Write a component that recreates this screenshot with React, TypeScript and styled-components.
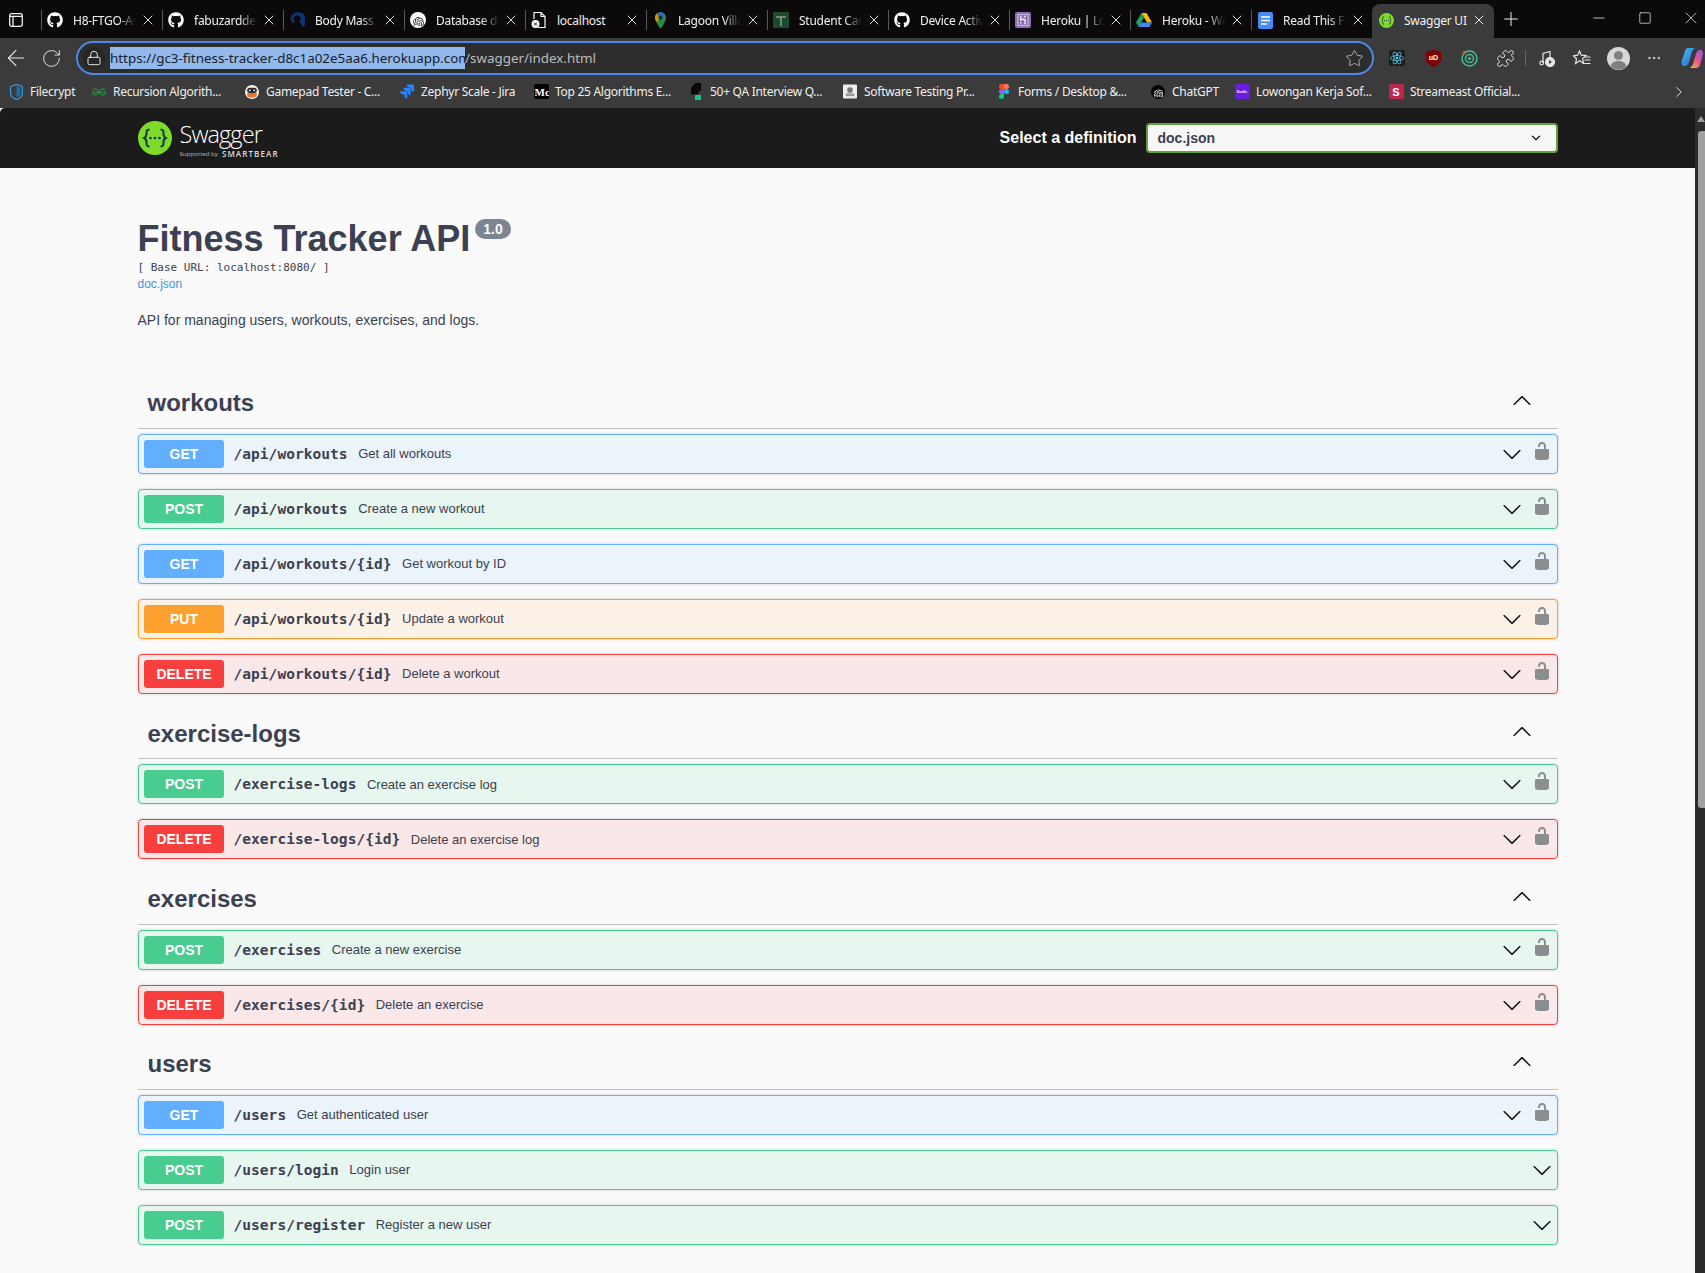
import React from "react";
import styled, { createGlobalStyle } from "styled-components";
import { ArrowLeft, RotateCw, Lock, Star, Puzzle, MoreHorizontal, ChevronRight, ChevronDown, Plus, X, Minus, Square } from "lucide-react";
import { FaGithub } from "react-icons/fa";
import { SiOpenai, SiHeroku, SiReact, SiGeeksforgeeks, SiJira } from "react-icons/si";

const GlobalStyle = createGlobalStyle`
  html, body { margin: 0; padding: 0; height: 100%; overflow: hidden; background: #fafafa; }
  * { box-sizing: border-box; }
`;

const uiFont = `"Noto Sans", "Open Sans", sans-serif`;
const docFont = `"Liberation Sans", Arial, sans-serif`;
const monoFont = `"DejaVu Sans Mono", "Liberation Mono", monospace`;

const Screen = styled.div`
  width: 1705px;
  height: 1273px;
  display: flex;
  flex-direction: column;
  overflow: hidden;
`;

/* browser chrome */
const TabStrip = styled.div`
  height: 38px;
  flex: none;
  display: flex;
  background: #0c090a;
  color: #f2f2f2;
  font: 12px ${uiFont};
  letter-spacing: -0.25px;
`;
const WindowMenu = styled.div`
  width: 41px;
  flex: none;
  display: flex;
  align-items: center;
  padding-left: 9px;
  padding-top: 2px;
`;
const Tab = styled.div<{ $active?: boolean }>`
  position: relative;
  width: ${(p) => (p.$active ? "122px" : "121px")};
  margin-top: 4px;
  flex: none;
  display: flex;
  align-items: center;
  padding: 0 0 2px 6px;
  border-radius: 8px 8px 0 0;
  background: ${(p) => (p.$active ? "#3b3b3b" : "transparent")};
  &::before {
    content: "";
    display: ${(p) => (p.$active ? "none" : "block")};
    position: absolute;
    left: 0;
    top: 6px;
    height: 20px;
    width: 1px;
    background: #5a5a5a;
  }
`;
const TabIcon = styled.span`
  width: 16px;
  height: 16px;
  flex: none;
  display: flex;
  align-items: center;
  justify-content: center;
`;
const TabTitle = styled.span<{ $fade?: boolean }>`
  margin-left: 10px;
  width: 63px;
  flex: none;
  white-space: nowrap;
  overflow: hidden;
  ${(p) => (p.$fade ? "mask-image: linear-gradient(90deg, #000 72%, transparent 100%);" : "")}
`;
const TabClose = styled.span`
  margin-left: 4px;
  display: flex;
  color: #ededed;
`;
const NewTab = styled.div`
  margin-left: 6px;
  display: flex;
  align-items: center;
  color: #eee;
`;
const WindowButtons = styled.div`
  margin-left: auto;
  display: flex;
  align-items: center;
  gap: 18px;
  padding-bottom: 2px;
  color: #eee;
`;
const IconSlot = styled.span<{ $w: number }>`
  width: ${(p) => p.$w}px;
  flex: none;
  display: flex;
  align-items: center;
  justify-content: center;
`;
const Toolbar = styled.div`
  height: 37px;
  flex: none;
  display: flex;
  align-items: center;
  padding-top: 3px;
  background: #3b3b3b;
  color: #e6e6e6;
`;
const NavButtons = styled.div`
  width: 76px;
  flex: none;
  display: flex;
  align-items: center;
  gap: 12px;
  padding-left: 3px;
`;
const AddressBar = styled.div`
  width: 1298px;
  height: 34px;
  flex: none;
  display: flex;
  align-items: center;
  border: 2px solid #4d87e6;
  border-radius: 17px;
  background: #2d2d2d;
  padding: 0 8px 0 5px;
  font: 13.4px ${uiFont};
`;
const LockBadge = styled.span`
  width: 22px;
  height: 22px;
  border-radius: 50%;
  background: #262626;
  display: flex;
  align-items: center;
  justify-content: center;
  flex: none;
`;
const SelectedUrl = styled.span`
  margin-left: 5px;
  height: 22px;
  line-height: 22px;
  width: 355px;
  flex: none;
  white-space: nowrap;
  background: #93b9ec;
  color: #16202c;
`;
const RestUrl = styled.span`
  color: #bcbcbc;
`;
const StarSlot = styled.span`
  margin-left: auto;
  display: flex;
  color: #bdbdbd;
`;
const ExtensionRow = styled.div`
  display: flex;
  align-items: center;
  flex: none;
  width: 331px;
  padding-left: 5px;
`;
const ExtDivider = styled.span`
  width: 1px;
  height: 16px;
  margin: 0 0 0 2px;
  background: #666;
  flex: none;
`;
const Bookmarks = styled.div`
  height: 33px;
  flex: none;
  display: flex;
  align-items: center;
  padding-left: 9px;
  background: #3b3b3b;
  color: #f0f0f0;
  font: 12px ${uiFont};
  letter-spacing: -0.28px;
`;
const Bookmark = styled.div<{ $w: number }>`
  width: ${(p) => p.$w}px;
  display: flex;
  align-items: center;
  flex: none;
  white-space: nowrap;
`;
const BookmarkIcon = styled.span`
  width: 14px;
  height: 16px;
  margin-right: 7px;
  flex: none;
  display: flex;
  align-items: center;
  justify-content: center;
`;
const MoreBookmarks = styled.span`
  margin-left: auto;
  margin-right: 17px;
  display: flex;
`;
const TinyTile = styled.span<{ $bg: string; $size?: number }>`
  width: ${(p) => p.$size ?? 15}px;
  height: ${(p) => p.$size ?? 15}px;
  flex: none;
  border-radius: 2px;
  background: ${(p) => p.$bg};
  color: #fff;
  display: flex;
  align-items: center;
  justify-content: center;
  overflow: hidden;
  letter-spacing: 0;
  font: bold 11px ${docFont};
`;
const MediumTile = styled(TinyTile)`
  font: bold 11px "Liberation Serif", serif;
  justify-content: flex-start;
  padding-left: 1px;
`;
const DeallsTile = styled(TinyTile)`
  font-size: 3.5px;
`;

/* swagger page */
const Viewport = styled.div`
  flex: 1;
  min-height: 0;
  display: flex;
`;
const PageColumn = styled.div`
  flex: 1;
  min-width: 0;
  background: #fafafa;
  font-family: ${docFont};
  color: #3b4151;
`;
const Scrollbar = styled.div`
  width: 10px;
  flex: none;
  background: #2c2c2c;
  display: flex;
  flex-direction: column;
  align-items: flex-end;
  padding-top: 8px;
`;
const ScrollArrow = styled.span`
  width: 0;
  height: 0;
  border-left: 4px solid transparent;
  border-right: 4px solid transparent;
  border-bottom: 6px solid #9c9c9c;
`;
const ScrollThumb = styled.span`
  width: 7px;
  height: 677px;
  margin-top: 9px;
  background: #a0a0a0;
  border-radius: 3px 0 0 3px;
`;
const Topbar = styled.header`
  height: 60px;
  background: #1b1b1b;
  border-radius: 5px 0 0 0;
`;
const Wrapper = styled.div`
  max-width: 1460px;
  margin: 0 auto;
  padding: 0 20px;
`;
const TopbarInner = styled(Wrapper)`
  height: 100%;
  display: flex;
  align-items: center;
`;
const Brand = styled.div`
  display: flex;
  align-items: center;
  gap: 8px;
`;
const BrandText = styled.div`
  display: flex;
  flex-direction: column;
  color: #fff;
  margin-top: 2px;
`;
const BrandName = styled.span`
  font: 300 23.5px/26px "Open Sans", sans-serif;
  letter-spacing: -0.9px;
`;
const BrandSub = styled.span`
  margin-top: 2px;
  font: 6.1px/9px "Open Sans", sans-serif;
  color: #bbb;
  display: flex;
  align-items: center;
  gap: 4px;
  b {
    font: 600 8px/9px "Open Sans", sans-serif;
    letter-spacing: 1.1px;
    color: #ddd;
  }
`;
const DefinitionForm = styled.div`
  margin-left: auto;
  display: flex;
  align-items: center;
  gap: 9px;
`;
const DefinitionLabel = styled.span`
  color: #fff;
  font: bold 16px ${docFont};
`;
const DefinitionSelect = styled.div`
  width: 412px;
  height: 30px;
  display: flex;
  align-items: center;
  justify-content: space-between;
  padding: 0 13px 0 10px;
  border: 2px solid #62a03f;
  border-radius: 4px;
  background: #f7f7f7;
  color: #3b4151;
  font: bold 14px ${docFont};
`;
const Info = styled.div`
  padding-top: 50px;
  margin-bottom: 48.67px;
`;
const TitleRow = styled.div`
  display: flex;
  align-items: flex-start;
  gap: 5px;
`;
const Title = styled.h2`
  margin: 0;
  font: bold 36px/42px ${docFont};
`;
const Version = styled.span`
  margin-top: 1px;
  height: 20px;
  padding: 0 8px;
  border-radius: 10px;
  background: #7d8492;
  color: #fafafa;
  font: bold 14px/20px ${docFont};
`;
const BaseUrl = styled.div`
  font: 11px/16px ${monoFont};
`;
const SpecLink = styled.div`
  font: 12px/16px ${docFont};
  color: #4990e2;
`;
const Description = styled.p`
  margin: 18px 0 0;
  font: 14px/20px ${docFont};
`;
const TagHeading = styled.div`
  height: 50.33px;
  display: flex;
  align-items: center;
  justify-content: space-between;
  padding: 0 26px 0 10px;
  margin-bottom: 5px;
  border-bottom: 1px solid rgba(59, 65, 81, 0.3);
  font: bold 24px ${docFont};
  svg {
    margin-bottom: 4px;
  }
`;

type Method = "GET" | "POST" | "PUT" | "DELETE";
const methodColors: Record<Method, { main: string; tint: string }> = {
  GET: { main: "#61affe", tint: "#ebf3fb" },
  POST: { main: "#49cc90", tint: "#e8f6f0" },
  PUT: { main: "#fca130", tint: "#fbf1e6" },
  DELETE: { main: "#f93e3e", tint: "#fae7e7" },
};

const OpRow = styled.div<{ $method: Method }>`
  height: 40px;
  margin-bottom: 15px;
  display: flex;
  align-items: center;
  padding: 0 5px;
  border: 1px solid ${(p) => methodColors[p.$method].main};
  border-radius: 4px;
  background: ${(p) => methodColors[p.$method].tint};
  box-shadow: 0 0 3px rgba(0, 0, 0, 0.19);
`;
const MethodBadge = styled.span<{ $method: Method }>`
  width: 80px;
  height: 28px;
  flex: none;
  padding-left: 1px;
  border-radius: 3px;
  background: ${(p) => methodColors[p.$method].main};
  color: #fff;
  text-align: center;
  font: bold 14px/28px ${docFont};
`;
const OpPath = styled.span`
  margin-left: 10px;
  padding-right: 10.5px;
  font: bold 14.5px ${monoFont};
  letter-spacing: 0.05px;
`;
const OpSummary = styled.span`
  font: 13px/1 ${docFont};
`;
const OpControls = styled.div`
  margin-left: auto;
  display: flex;
  align-items: center;
  gap: 10px;
`;
const LockButton = styled.svg`
  margin-bottom: 6px;
  fill: #8b8e90;
`;

const Chevron = ({ up }: { up?: boolean }) => (
  <svg width="20" height="20" viewBox="0 0 20 20" fill="#111" style={up ? { transform: "rotate(180deg)" } : undefined}>
    <path d="M17.418 6.109c.272-.268.709-.268.979 0s.271.701 0 .969l-7.908 7.83c-.27.268-.707.268-.979 0l-7.908-7.83c-.27-.268-.27-.701 0-.969.271-.268.709-.268.979 0L10 13.25l7.418-7.141z" />
  </svg>
);

const OpenLock = () => (
  <LockButton width="20" height="20" viewBox="0 0 20 20">
    <path d="M15.8 8H14V5.6C14 2.703 12.665 1 10 1 7.334 1 6 2.703 6 5.6V6h2v-.801C8 3.754 8.797 3 10 3c1.203 0 2 .754 2 2.199V8H4c-.553 0-1 .646-1 1.199V17c0 .549.428 1.139.951 1.307l1.197.387C5.672 18.861 6.55 19 7.1 19h5.8c.549 0 1.428-.139 1.951-.307l1.196-.387c.524-.167.953-.757.953-1.306V9.199C17 8.646 16.352 8 15.8 8z" />
  </LockButton>
);

const SwaggerMark = ({ size }: { size: number }) => (
  <svg width={size} height={size} viewBox="0 0 34 34">
    <circle cx="17" cy="17" r="17" fill="#7edb2c" />
    <path d="M11.5 8.5c-3 0-3 1.6-3 4 0 2.5-.4 3.6-2.2 4.5 1.8.9 2.2 2 2.2 4.5 0 2.4 0 4 3 4M22.5 8.5c3 0 3 1.6 3 4 0 2.5.4 3.6 2.2 4.5-1.8.9-2.2 2-2.2 4.5 0 2.4 0 4-3 4" fill="none" stroke="#173647" strokeWidth="2" />
    <circle cx="12.5" cy="17" r="1.3" fill="#173647" />
    <circle cx="17" cy="17" r="1.3" fill="#173647" />
    <circle cx="21.5" cy="17" r="1.3" fill="#173647" />
  </svg>
);

const WindowMenuIcon = () => (
  <svg width="14" height="14" viewBox="0 0 14 14" fill="none" stroke="#eee" strokeWidth="1.3">
    <rect x="0.7" y="0.7" width="12.6" height="12.6" rx="2" />
    <path d="M0.7 3.4h12.6M4 3.4v9.9" />
  </svg>
);

const RingMark = () => (
  <svg width="16" height="18" viewBox="0 0 16 18" fill="none">
    <path d="M8 1.5a6.2 6.2 0 0 0-4 11l2-2a3.4 3.4 0 1 1 4.3 0L14 16a8 8 0 0 0-6-14.500z" fill="#0e3370" />
  </svg>
);
const OpenAiDisc = ({ bg, fg }: { bg: string; fg: string }) => (
  <svg width="16" height="16" viewBox="0 0 16 16">
    <circle cx="8" cy="8" r="8" fill={bg} />
    <foreignObject x="2.500" y="2.500" width="11" height="11">
      <SiOpenai size={11} color={fg} />
    </foreignObject>
  </svg>
);
const LocalFile = () => (
  <svg width="16" height="18" viewBox="0 0 16 18" fill="none" stroke="#fff" strokeWidth="1.200">
    <path d="M3 8V1.500h7l4 4v11H7" />
    <path d="M10 1.500v4h4" />
    <circle cx="4.500" cy="13" r="4" fill="#fff" stroke="none" />
    <path d="M3 11.500l3 3M6 11.500l-3 3" stroke="#222" strokeWidth="1" />
  </svg>
);
const MapPin = () => (
  <svg width="13" height="17" viewBox="0 0 14 18">
    <path d="M7 0a6 6 0 0 0-6 6c0 4 6 12 6 12s6-8 6-12a6 6 0 0 0-6-6z" fill="#2b8a47" />
    <path d="M1 6a6 6 0 0 1 2-4.500l4 4.500-4 5C2 9.500 1 7.500 1 6z" fill="#c9970a" />
    <path d="M3 1.500A6 6 0 0 1 12 3L7 6z" fill="#2f66c4" />
    <circle cx="7" cy="6" r="2.200" fill="#0f2f6a" />
  </svg>
);
const SheetTile = () => (
  <svg width="16" height="16" viewBox="0 0 16 16">
    <rect width="16" height="16" rx="1" fill="#1c4a2e" />
    <path d="M3 5h10M8 5v9" stroke="#8d9c8f" strokeWidth="1.6" />
  </svg>
);
const HerokuTile = () => (
  <TinyTile $bg="#8b6fb5" $size={16}>
    <SiHeroku size={12} color="#fff" />
  </TinyTile>
);
const DriveMark = () => (
  <svg width="16" height="14" viewBox="0 0 16 14">
    <polygon points="5.500,0 10.500,0 16,9.500 11,9.500" fill="#fbbc04" />
    <polygon points="5.500,0 8,4.500 2.700,14 0,9.500" fill="#1fa463" />
    <polygon points="5,9.500 16,9.500 13.400,14 2.700,14" fill="#4285f4" />
  </svg>
);
const DocsMark = () => (
  <svg width="15" height="17" viewBox="0 0 15 17">
    <rect width="15" height="17" rx="2" fill="#4a8af4" />
    <path d="M3 5h9M3 8.500h9M3 12h6" stroke="#fff" strokeWidth="1.600" />
  </svg>
);
const ShieldMark = () => (
  <svg width="13" height="16" viewBox="0 0 13 16">
    <path d="M6.500.5 12.500 2.500v6c0 3.500-3 6-6 7-3-1-6-3.500-6-7v-6z" fill="none" stroke="#3e9bdc" strokeWidth="1.200" />
    <path d="M6.500 2.500 10.500 3.800v4.700c0 2.300-2 3.900-4 4.800z" fill="#1f6fb0" />
  </svg>
);
const GamepadFace = () => (
  <svg width="16" height="16" viewBox="0 0 16 16">
    <circle cx="8" cy="8" r="8" fill="#f4f0ea" />
    <rect x="2.500" y="3" width="11" height="6" rx="3" fill="#2a2a2a" />
    <path d="M2.500 9h11v2c0 2-3 3.500-5.500 3.500S2.500 13 2.500 11z" fill="#e8742c" />
    <circle cx="5.500" cy="6" r="1" fill="#fff" />
    <circle cx="10.500" cy="6" r="1" fill="#fff" />
  </svg>
);
const QaMark = () => (
  <svg width="14" height="17" viewBox="0 0 14 17">
    <polygon points="6,0 12,0 12,7 8,11.500 2,11.500 2,5" fill="#0a0a0a" />
    <rect x="6" y="12" width="6" height="5" fill="#1cc48d" />
  </svg>
);
const BookEmblem = () => (
  <svg width="15" height="15" viewBox="0 0 15 15">
    <rect width="15" height="15" rx="1" fill="#ededed" />
    <circle cx="7.500" cy="6" r="3" fill="#777" />
    <rect x="3" y="9.500" width="9" height="3" fill="#999" />
  </svg>
);
const FigmaMark = () => (
  <svg width="10" height="15" viewBox="0 0 10 15">
    <path d="M0 2.500A2.500 2.500 0 0 1 2.500 0H5v5H2.500A2.500 2.500 0 0 1 0 2.500z" fill="#f24e1e" />
    <path d="M5 0h2.500a2.500 2.500 0 0 1 0 5H5z" fill="#ff7262" />
    <path d="M0 7.500A2.500 2.500 0 0 1 2.500 5H5v5H2.500A2.500 2.500 0 0 1 0 7.500z" fill="#a259ff" />
    <circle cx="7.500" cy="7.500" r="2.500" fill="#1abcfe" />
    <path d="M0 12.500A2.500 2.500 0 0 1 2.500 10H5v2.500a2.500 2.500 0 0 1-5 0z" fill="#0acf83" />
  </svg>
);
const UblockShield = () => (
  <svg width="15" height="17" viewBox="0 0 15 17">
    <path d="M7.500 0 15 2v7c0 4-4 6.500-7.500 8C4 15.500 0 13 0 9V2z" fill="#800000" />
    <text x="7.500" y="10" textAnchor="middle" fontSize="7" fontWeight="700" fill="#fff" fontFamily="Liberation Sans">uD</text>
  </svg>
);
const TargetRing = () => (
  <svg width="17" height="17" viewBox="0 0 17 17" fill="none">
    <circle cx="8.500" cy="8.500" r="7.500" stroke="#3fc08f" strokeWidth="1.500" />
    <circle cx="8.500" cy="8.500" r="4" stroke="#3fc08f" strokeWidth="1.500" />
    <circle cx="8.500" cy="8.500" r="1.500" fill="#3fc08f" />
    <circle cx="3.500" cy="2.500" r="1.700" fill="#e4572e" />
  </svg>
);
const MusicPlay = () => (
  <svg width="16" height="17" viewBox="0 0 16 17" fill="none" stroke="#e6e6e6" strokeWidth="1.200">
    <path d="M4 13V3.500L11 1.500V7" />
    <circle cx="2.700" cy="13" r="1.800" />
    <circle cx="11" cy="12" r="4.500" fill="#e6e6e6" />
    <path d="M10 10v4l3-2z" fill="#3b3b3b" stroke="none" />
  </svg>
);
const FavoritesStar = () => (
  <svg width="18" height="16" viewBox="0 0 18 16" fill="none" stroke="#e6e6e6" strokeWidth="1.200">
    <path d="M6.500 1 8.300 5.200 13 5.600 9.600 8.600 10.500 13 6.500 10.800 2.600 13.500 3.500 8.800 .5 5.800 4.700 5.200z" />
    <path d="M11.500 7h6M11.500 10h6M9.500 13.500h8" />
  </svg>
);
const Avatar = () => (
  <svg width="23" height="23" viewBox="0 0 23 23">
    <circle cx="11.500" cy="11.500" r="11.500" fill="#d8d8d8" />
    <circle cx="11.500" cy="8.500" r="4.500" fill="#808080" />
    <path d="M3.500 19.500c1-4 4-5.500 8-5.500s7 1.500 8 5.500a11.500 11.500 0 0 1-16 0z" fill="#808080" />
  </svg>
);
const CopilotMark = () => (
  <svg width="22" height="22" viewBox="0 0 22 22">
    <defs>
      <linearGradient id="copa" x1="0" y1="0" x2="1" y2="1">
        <stop offset="0" stopColor="#36c3e8" />
        <stop offset="1" stopColor="#3b5bdc" />
      </linearGradient>
      <linearGradient id="copb" x1="0" y1="1" x2="1" y2="0">
        <stop offset="0" stopColor="#f6c445" />
        <stop offset="0.5" stopColor="#e9578a" />
        <stop offset="1" stopColor="#8a5be8" />
      </linearGradient>
    </defs>
    <path d="M7 1h8c-3 .5-4 3-5 7l-2 7c-.5 2-2 4-4 4H3C1 19 0 16 1 13L4 4c.5-2 1.500-3 3-3z" fill="url(#copa)" />
    <path d="M15 21H8c3-.5 4-3 5-7l2-7c.5-2 2-4 4-4h1c1.500 0 2.500 2.500 1.500 6L19 18c-.5 2-2 3-4 3z" fill="url(#copb)" />
  </svg>
);

const tabs: { title: string; icon: React.ReactNode; fade?: boolean }[] = [
  { title: "H8-FTGO-Assignment", icon: <FaGithub size={16} color="#fff" /> },
  { title: "fabuzarddev/gc3", icon: <FaGithub size={16} color="#fff" /> },
  { title: "Body Mass Index", icon: <RingMark /> },
  { title: "Database details", icon: <OpenAiDisc bg="#fff" fg="#222" /> },
  { title: "localhost", icon: <LocalFile />, fade: false },
  { title: "Lagoon Villa Resort", icon: <MapPin /> },
  { title: "Student Card Sheet", icon: <SheetTile /> },
  { title: "Device Activation", icon: <FaGithub size={16} color="#fff" /> },
  { title: "Heroku | Login", icon: <HerokuTile /> },
  { title: "Heroku - Web", icon: <DriveMark /> },
  { title: "Read This First", icon: <DocsMark /> },
];

const bookmarks: { label: string; w: number; icon: React.ReactNode }[] = [
  { label: "Filecrypt", w: 83, icon: <ShieldMark /> },
  { label: "Recursion Algorith...", w: 153, icon: <SiGeeksforgeeks size={14} color="#2f8d46" /> },
  { label: "Gamepad Tester - C...", w: 155, icon: <GamepadFace /> },
  { label: "Zephyr Scale - Jira", w: 134, icon: <SiJira size={15} color="#2684ff" /> },
  { label: "Top 25 Algorithms E...", w: 155, icon: <MediumTile $bg="#000">Mc</MediumTile> },
  { label: "50+ QA Interview Q...", w: 154, icon: <QaMark /> },
  { label: "Software Testing Pr...", w: 154, icon: <BookEmblem /> },
  { label: "Forms / Desktop &...", w: 154, icon: <FigmaMark /> },
  { label: "ChatGPT", w: 84, icon: <OpenAiDisc bg="#000" fg="#fff" /> },
  { label: "Lowongan Kerja Sof...", w: 154, icon: <DeallsTile $bg="#6a1de0">Dealls</DeallsTile> },
  { label: "Streameast Official...", w: 130, icon: <TinyTile $bg="#c0254f">S</TinyTile> },
];

type Op = { method: Method; path: string; summary: string; locked?: boolean };
const sections: { tag: string; ops: Op[] }[] = [
  {
    tag: "workouts",
    ops: [
      { method: "GET", path: "/api/workouts", summary: "Get all workouts", locked: true },
      { method: "POST", path: "/api/workouts", summary: "Create a new workout", locked: true },
      { method: "GET", path: "/api/workouts/{id}", summary: "Get workout by ID", locked: true },
      { method: "PUT", path: "/api/workouts/{id}", summary: "Update a workout", locked: true },
      { method: "DELETE", path: "/api/workouts/{id}", summary: "Delete a workout", locked: true },
    ],
  },
  {
    tag: "exercise-logs",
    ops: [
      { method: "POST", path: "/exercise-logs", summary: "Create an exercise log", locked: true },
      { method: "DELETE", path: "/exercise-logs/{id}", summary: "Delete an exercise log", locked: true },
    ],
  },
  {
    tag: "exercises",
    ops: [
      { method: "POST", path: "/exercises", summary: "Create a new exercise", locked: true },
      { method: "DELETE", path: "/exercises/{id}", summary: "Delete an exercise", locked: true },
    ],
  },
  {
    tag: "users",
    ops: [
      { method: "GET", path: "/users", summary: "Get authenticated user", locked: true },
      { method: "POST", path: "/users/login", summary: "Login user" },
      { method: "POST", path: "/users/register", summary: "Register a new user" },
    ],
  },
];

export default function App() {
  return (
    <Screen>
      <GlobalStyle />
      <TabStrip>
        <WindowMenu>
          <WindowMenuIcon />
        </WindowMenu>
        {tabs.map((t) => (
          <Tab key={t.title}>
            <TabIcon>{t.icon}</TabIcon>
            <TabTitle $fade={t.fade !== false}>{t.title}</TabTitle>
            <TabClose>
              <X size={16} strokeWidth={1.4} />
            </TabClose>
          </Tab>
        ))}
        <Tab $active>
          <TabIcon>
            <SwaggerMark size={15} />
          </TabIcon>
          <TabTitle>Swagger UI</TabTitle>
          <TabClose>
            <X size={16} strokeWidth={1.4} />
          </TabClose>
        </Tab>
        <NewTab>
          <Plus size={22} strokeWidth={1.1} />
        </NewTab>
        <WindowButtons>
          <IconSlot $w={28}><Minus size={18} strokeWidth={1} /></IconSlot>
          <IconSlot $w={28}><Square size={14} strokeWidth={1.2} /></IconSlot>
          <IconSlot $w={28}><X size={20} strokeWidth={0.9} /></IconSlot>
        </WindowButtons>
      </TabStrip>
      <Toolbar>
        <NavButtons>
          <IconSlot $w={26}><ArrowLeft size={26} strokeWidth={1} /></IconSlot>
          <IconSlot $w={21}><RotateCw size={21} strokeWidth={1.1} /></IconSlot>
        </NavButtons>
        <AddressBar>
          <LockBadge>
            <Lock size={16} strokeWidth={1.4} color="#f0f0f0" />
          </LockBadge>
          <SelectedUrl>https://gc3-fitness-tracker-d8c1a02e5aa6.herokuapp.com</SelectedUrl>
          <RestUrl>/swagger/index.html</RestUrl>
          <StarSlot>
            <Star size={19} strokeWidth={1.1} />
          </StarSlot>
        </AddressBar>
        <ExtensionRow>
          <IconSlot $w={36}>
            <TinyTile $bg="#1c1c1c" $size={16}>
              <SiReact size={14} color="#61dafb" />
            </TinyTile>
          </IconSlot>
          <IconSlot $w={36}><UblockShield /></IconSlot>
          <IconSlot $w={36}><TargetRing /></IconSlot>
          <IconSlot $w={36}><Puzzle size={19} strokeWidth={1.2} /></IconSlot>
          <ExtDivider />
          <IconSlot $w={42}><MusicPlay /></IconSlot>
          <IconSlot $w={28}><FavoritesStar /></IconSlot>
          <IconSlot $w={44}><Avatar /></IconSlot>
          <IconSlot $w={28}><MoreHorizontal size={16} strokeWidth={1.5} /></IconSlot>
          <IconSlot $w={48}><CopilotMark /></IconSlot>
        </ExtensionRow>
      </Toolbar>
      <Bookmarks>
        {bookmarks.map((b) => (
          <Bookmark key={b.label} $w={b.w}>
            <BookmarkIcon>{b.icon}</BookmarkIcon>
            <span>{b.label}</span>
          </Bookmark>
        ))}
        <MoreBookmarks>
          <ChevronRight size={18} strokeWidth={1.2} />
        </MoreBookmarks>
      </Bookmarks>
      <Viewport>
        <PageColumn>
          <Topbar>
            <TopbarInner>
              <Brand>
                <SwaggerMark size={34} />
                <BrandText>
                  <BrandName>Swagger</BrandName>
                  <BrandSub>
                    Supported by <b>SMARTBEAR</b>
                  </BrandSub>
                </BrandText>
              </Brand>
              <DefinitionForm>
                <DefinitionLabel>Select a definition</DefinitionLabel>
                <DefinitionSelect>
                  doc.json
                  <ChevronDown size={14} strokeWidth={2.4} color="#222" />
                </DefinitionSelect>
              </DefinitionForm>
            </TopbarInner>
          </Topbar>
          <Wrapper>
            <Info>
              <TitleRow>
                <Title>Fitness Tracker API</Title>
                <Version>1.0</Version>
              </TitleRow>
              <BaseUrl>[ Base URL: localhost:8080/ ]</BaseUrl>
              <SpecLink>doc.json</SpecLink>
              <Description>API for managing users, workouts, exercises, and logs.</Description>
            </Info>
            {sections.map((s) => (
              <section key={s.tag}>
                <TagHeading>
                  {s.tag}
                  <Chevron up />
                </TagHeading>
                {s.ops.map((op) => (
                  <OpRow key={op.method + op.path} $method={op.method}>
                    <MethodBadge $method={op.method}>{op.method}</MethodBadge>
                    <OpPath>{op.path}</OpPath>
                    <OpSummary>{op.summary}</OpSummary>
                    <OpControls>
                      <Chevron />
                      {op.locked && <OpenLock />}
                    </OpControls>
                  </OpRow>
                ))}
              </section>
            ))}
          </Wrapper>
        </PageColumn>
        <Scrollbar>
          <ScrollArrow />
          <ScrollThumb />
        </Scrollbar>
      </Viewport>
    </Screen>
  );
}
